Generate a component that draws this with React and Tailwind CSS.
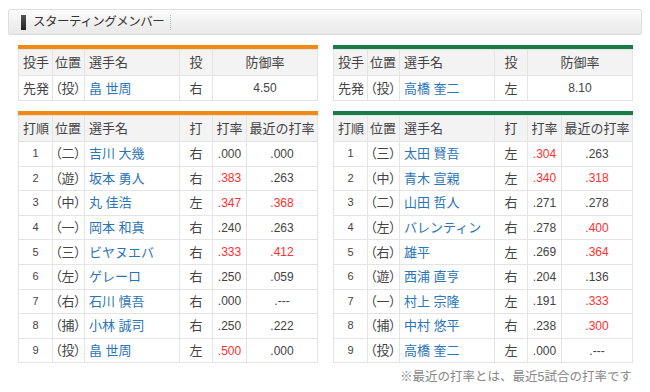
const teams = [
  {
    color: 'bg-[#f28a12]',
    pitcher: { name: '畠 世周', hand: '右', era: '4.50' },
    batters: [
      ['1', '（二）', '吉川 大幾', '右', '.000', false, '.000', false],
      ['2', '（遊）', '坂本 勇人', '右', '.383', true, '.263', false],
      ['3', '（中）', '丸 佳浩', '左', '.347', true, '.368', true],
      ['4', '（一）', '岡本 和真', '右', '.240', false, '.263', false],
      ['5', '（三）', 'ビヤヌエバ', '右', '.333', true, '.412', true],
      ['6', '（左）', 'ゲレーロ', '右', '.250', false, '.059', false],
      ['7', '（右）', '石川 慎吾', '右', '.000', false, '.---', false],
      ['8', '（捕）', '小林 誠司', '右', '.250', false, '.222', false],
      ['9', '（投）', '畠 世周', '左', '.500', true, '.000', false],
    ],
  },
  {
    color: 'bg-[#177d48]',
    pitcher: { name: '高橋 奎二', hand: '左', era: '8.10' },
    batters: [
      ['1', '（三）', '太田 賢吾', '左', '.304', true, '.263', false],
      ['2', '（中）', '青木 宣親', '左', '.340', true, '.318', true],
      ['3', '（二）', '山田 哲人', '右', '.271', false, '.278', false],
      ['4', '（左）', 'バレンティン', '右', '.278', false, '.400', true],
      ['5', '（右）', '雄平', '左', '.269', false, '.364', true],
      ['6', '（遊）', '西浦 直亨', '右', '.204', false, '.136', false],
      ['7', '（一）', '村上 宗隆', '左', '.191', false, '.333', true],
      ['8', '（捕）', '中村 悠平', '右', '.238', false, '.300', true],
      ['9', '（投）', '高橋 奎二', '左', '.000', false, '.---', false],
    ],
  },
];

const th = 'border border-[#e4e4e4] bg-[#f3f3f3] font-normal h-[26px] p-0 pl-[4px] whitespace-nowrap leading-none';
const td = 'border border-[#e4e4e4] bg-white p-0 pl-[4px] whitespace-nowrap leading-none';
const pos = 'text-left !pl-[2px] text-[13px] [font-feature-settings:"palt"]';

function PitcherTable({ team }) {
  return (
    <div>
      <div className={`h-[4px] ${team.color}`} />
      <table className="w-[300px] table-fixed border-collapse text-[13px]">
        <colgroup>
          <col className="w-[34px]" />
          <col className="w-[32px]" />
          <col className="w-[95px]" />
          <col className="w-[33px]" />
          <col />
        </colgroup>
        <thead>
          <tr>
            <th className={`${th} text-left`}>投手</th>
            <th className={`${th} text-left !pl-[2px]`}>位置</th>
            <th className={`${th} text-left`}>選手名</th>
            <th className={`${th} text-center !pl-0`}>投</th>
            <th className={`${th} text-center !pl-0`}>防御率</th>
          </tr>
        </thead>
        <tbody>
          <tr className="h-[25px]">
            <td className={`${td} text-left`}>先発</td>
            <td className={`${td} ${pos}`}>（投）</td>
            <td className={`${td} text-left text-[#2b74b6]`}>{team.pitcher.name}</td>
            <td className={`${td} text-center !pl-0`}>{team.pitcher.hand}</td>
            <td className={`${td} text-center !pl-0 text-[12px]`}>{team.pitcher.era}</td>
          </tr>
        </tbody>
      </table>
    </div>
  );
}

function BatterTable({ team }) {
  return (
    <div>
      <div className={`h-[4px] ${team.color}`} />
      <table className="w-[300px] table-fixed border-collapse text-[13px]">
        <colgroup>
          <col className="w-[34px]" />
          <col className="w-[32px]" />
          <col className="w-[95px]" />
          <col className="w-[33px]" />
          <col className="w-[34px]" />
          <col />
        </colgroup>
        <thead>
          <tr>
            <th className={`${th} text-left`}>打順</th>
            <th className={`${th} text-left !pl-[2px]`}>位置</th>
            <th className={`${th} text-left`}>選手名</th>
            <th className={`${th} text-center !pl-0`}>打</th>
            <th className={`${th} text-center !pl-0`}>打率</th>
            <th className={`${th} text-center !pl-0`}>最近の打率</th>
          </tr>
        </thead>
        <tbody>
          {team.batters.map((b) => (
            <tr key={b[0]} className="h-[24.6px]">
              <td className={`${td} text-center !pl-0 text-[11px]`}>{b[0]}</td>
              <td className={`${td} ${pos}`}>{b[1]}</td>
              <td className={`${td} text-left text-[#2b74b6]`}>{b[2]}</td>
              <td className={`${td} text-center !pl-0`}>{b[3]}</td>
              <td className={`${td} text-center !pl-0 text-[12px] ${b[5] ? 'text-[#ff3030]' : ''}`}>{b[4]}</td>
              <td className={`${td} text-center !pl-0 text-[12px] ${b[7] ? 'text-[#ff3030]' : ''}`}>{b[6]}</td>
            </tr>
          ))}
        </tbody>
      </table>
    </div>
  );
}

export default function App() {
  return (
    <div
      className="w-[650px] h-[392px] bg-white px-[8px] pt-[9px] text-[12px] text-[#444]"
      style={{ fontFamily: '"Liberation Sans", "Noto Sans CJK JP", sans-serif' }}
    >
      <div className="h-[26px] flex items-center rounded-[2px] border border-[#dedede] bg-gradient-to-b from-[#fcfcfc] via-[#f1f1f1] to-[#e9e9e9] px-[12px]">
        <span className="w-[5px] h-[15px] bg-gradient-to-b from-[#555] to-[#222]" />
        <span className="ml-[7px] text-[12.5px] text-[#333] tracking-[-0.5px]">スターティングメンバー</span>
        <span className="ml-[6px] h-[15px] border-l border-dotted border-[#bbb]" />
      </div>

      <div className="mt-[10px] px-[10px] grid grid-cols-[300px_300px] gap-x-[15px]">
        {teams.map((t, i) => (
          <PitcherTable key={i} team={t} />
        ))}
      </div>

      <div className="mt-[10px] px-[10px] grid grid-cols-[300px_300px] gap-x-[15px]">
        {teams.map((t, i) => (
          <BatterTable key={i} team={t} />
        ))}
      </div>

      <div className="mt-[4px] pr-[10px] text-right text-[12.5px] text-[#888] leading-[20px]">
        ※最近の打率とは、最近5試合の打率です
      </div>
    </div>
  );
}
